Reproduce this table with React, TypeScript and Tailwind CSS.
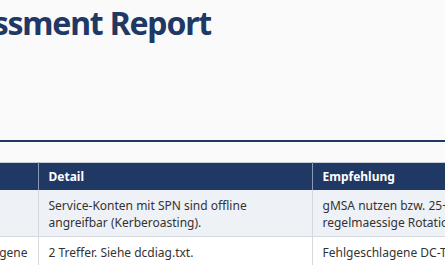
import React from 'react';

const font = { fontFamily: '"Noto Sans", "Open Sans", sans-serif' };

export default function App() {
  return (
    <div className="w-[445px] h-[265px] overflow-hidden bg-[#fafafa] text-[#333]" style={font}>
      {/* Titel: linker Teil liegt ausserhalb des Fensters */}
      <div className="flex justify-end w-[211px] whitespace-nowrap">
        <h1 className="text-[32px] leading-[45px] font-bold text-[#1f3864] tracking-[-1.2px]">AD Security Assessment Report</h1>
      </div>

      <div className="mt-[95px] h-[2px] bg-[#1f3864]" />

      <div className="mt-[20px] w-[900px] -ml-[160px]">
        <table className="border-collapse text-[12px] leading-[17px] w-full table-fixed">
          <colgroup>
            <col className="w-[198px]" />
            <col className="w-[274px]" />
            <col />
          </colgroup>
          <thead>
            <tr className="bg-[#1f3864] text-white font-bold text-left border-t border-[#c8cdd5]">
              <th className="px-[10px] py-[5px] border-r border-[#8a9ab5]">Befund</th>
              <th className="px-[10px] py-[5px] border-r border-[#8a9ab5]">Detail</th>
              <th className="px-[10px] py-[5px]">Empfehlung</th>
            </tr>
          </thead>
          <tbody>
            <tr className="bg-[#eef1f5] border-b border-[#d5d9e0]">
              <td className="px-[10px] pt-[7px] pb-[5px] align-top border-r border-[#d5d9e0]">Kerberoasting</td>
              <td className="px-[10px] pt-[7px] pb-[5px] align-top border-r border-[#d5d9e0]">Service-Konten mit SPN sind offline angreifbar (Kerberoasting).</td>
              <td className="px-[10px] pt-[7px] pb-[5px] align-top">
                gMSA nutzen bzw. 25+ Zeichen lange Passwoerter und
                <br />
                regelmaessige Rotation.
              </td>
            </tr>
            <tr className="bg-white">
              <td className="px-[10px] pt-[7px] pb-[5px] align-top border-r border-[#d5d9e0]">
                <div className="flex justify-end whitespace-nowrap">DC-Diagnose Fehlgeschlagene</div>
              </td>
              <td className="px-[10px] pt-[7px] pb-[5px] align-top border-r border-[#d5d9e0]">2 Treffer. Siehe dcdiag.txt.</td>
              <td className="px-[10px] pt-[7px] pb-[5px] align-top">Fehlgeschlagene DC-Tests pruefen und beheben.</td>
            </tr>
          </tbody>
        </table>
      </div>
    </div>
  );
}
